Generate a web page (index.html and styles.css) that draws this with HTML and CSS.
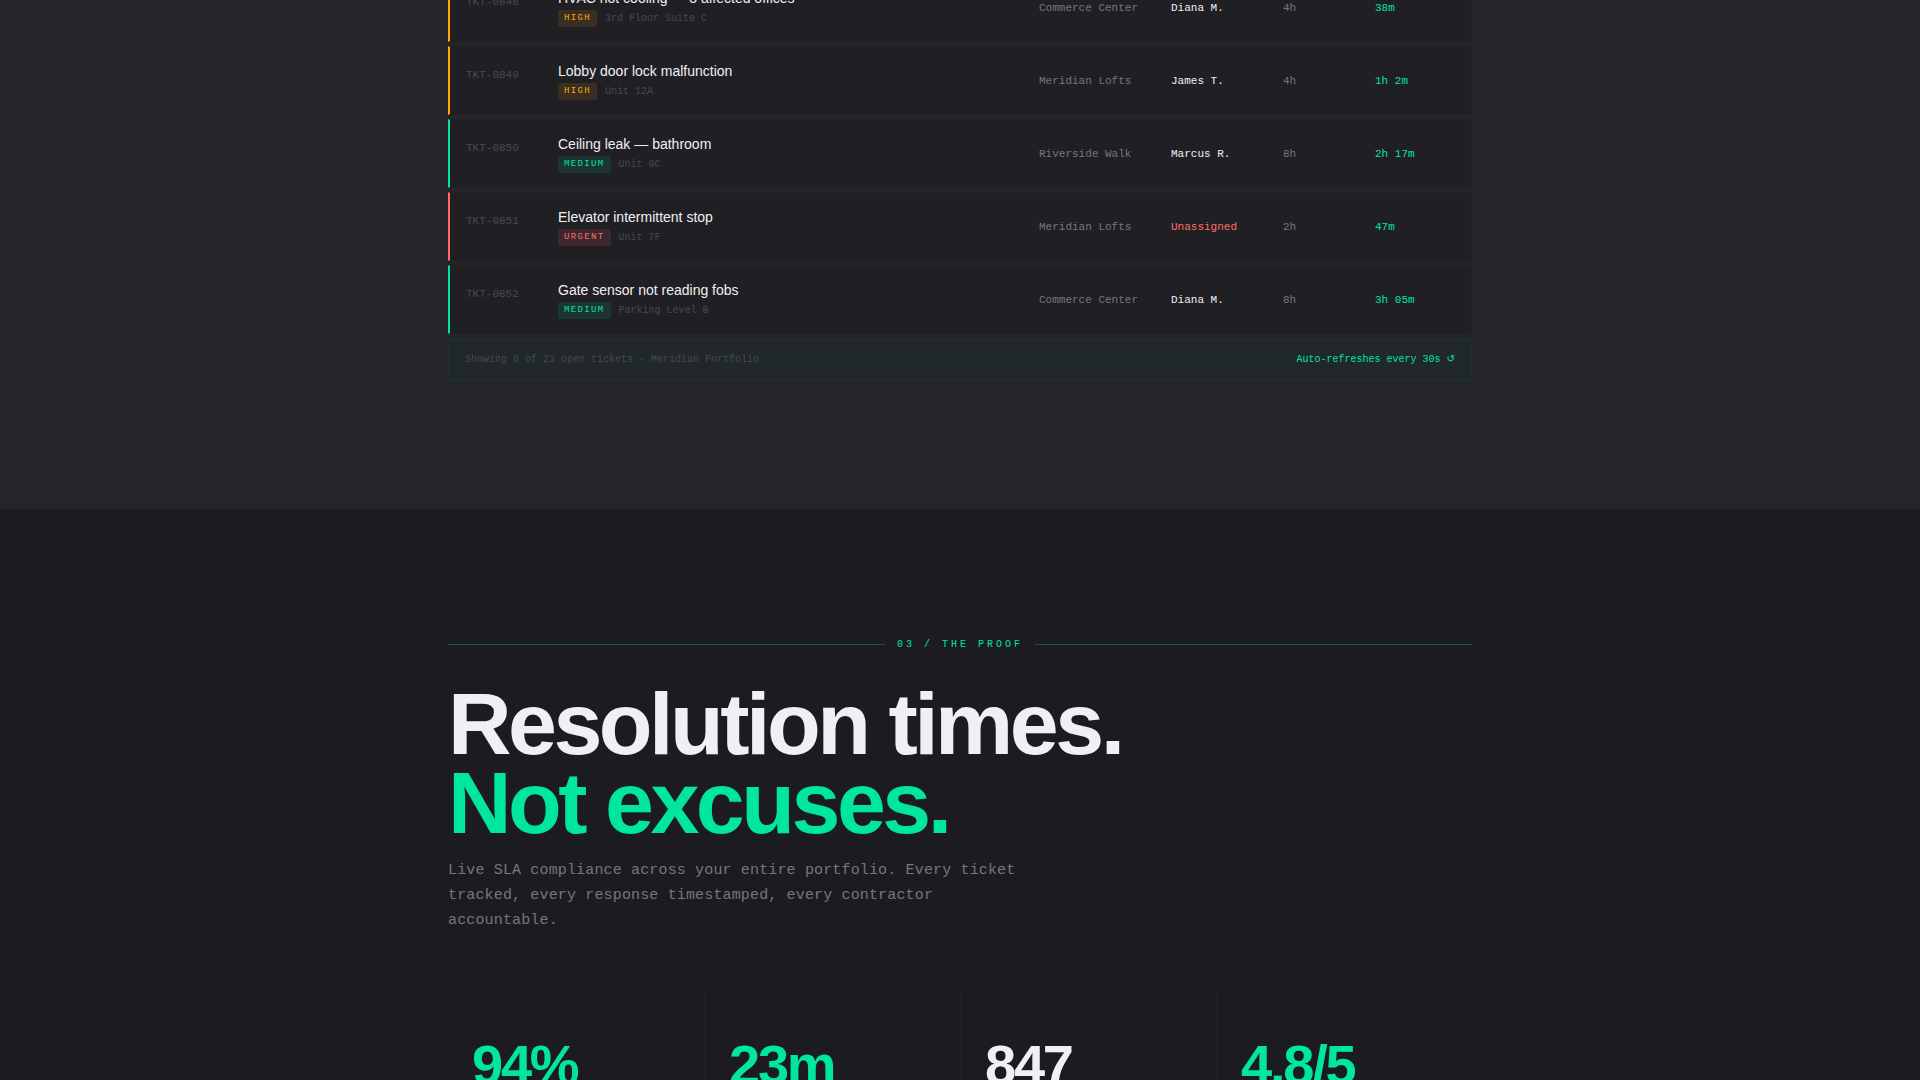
FILE: index.html
```html
<!DOCTYPE html>
<html lang="en">
<head>
  <meta charset="UTF-8">
  <meta name="viewport" content="width=device-width, initial-scale=1.0">
  <title>Meridian Portfolio</title>
  <link rel="stylesheet" href="styles.css">
</head>
<body>
  <section class="board">
    <div class="container">
      <table class="tickets">
        <tbody>
          <tr class="high">
            <td class="id">TKT-0848</td>
            <td>
              <div class="title">HVAC not cooling — 3 affected offices</div>
              <div class="meta"><span class="badge">HIGH</span><span>3rd Floor Suite C</span></div>
            </td>
            <td class="property">Commerce Center</td>
            <td class="assignee">Diana M.</td>
            <td class="sla">4h</td>
            <td class="elapsed">38m</td>
          </tr>
          <tr class="high">
            <td class="id">TKT-0849</td>
            <td>
              <div class="title">Lobby door lock malfunction</div>
              <div class="meta"><span class="badge">HIGH</span><span>Unit 12A</span></div>
            </td>
            <td class="property">Meridian Lofts</td>
            <td class="assignee">James T.</td>
            <td class="sla">4h</td>
            <td class="elapsed">1h 2m</td>
          </tr>
          <tr class="medium">
            <td class="id">TKT-0850</td>
            <td>
              <div class="title">Ceiling leak — bathroom</div>
              <div class="meta"><span class="badge">MEDIUM</span><span>Unit 9C</span></div>
            </td>
            <td class="property">Riverside Walk</td>
            <td class="assignee">Marcus R.</td>
            <td class="sla">8h</td>
            <td class="elapsed">2h 17m</td>
          </tr>
          <tr class="urgent">
            <td class="id">TKT-0851</td>
            <td>
              <div class="title">Elevator intermittent stop</div>
              <div class="meta"><span class="badge">URGENT</span><span>Unit 7F</span></div>
            </td>
            <td class="property">Meridian Lofts</td>
            <td class="assignee unassigned">Unassigned</td>
            <td class="sla">2h</td>
            <td class="elapsed">47m</td>
          </tr>
          <tr class="medium">
            <td class="id">TKT-0852</td>
            <td>
              <div class="title">Gate sensor not reading fobs</div>
              <div class="meta"><span class="badge">MEDIUM</span><span>Parking Level B</span></div>
            </td>
            <td class="property">Commerce Center</td>
            <td class="assignee">Diana M.</td>
            <td class="sla">8h</td>
            <td class="elapsed">3h 05m</td>
          </tr>
        </tbody>
      </table>
      <div class="board-footer">
        <span>Showing 6 of 23 open tickets · Meridian Portfolio</span>
        <span class="refresh">Auto-refreshes every 30s <span class="refresh-icon">↺</span></span>
      </div>
    </div>
  </section>

  <section class="proof">
    <div class="container">
      <div class="section-label">03 / THE PROOF</div>
      <h2>Resolution times.<br><span class="accent">Not excuses.</span></h2>
      <p class="lead">Live SLA compliance across your entire portfolio. Every ticket tracked, every response timestamped, every contractor accountable.</p>
      <div class="stats">
        <div class="stat accent">94%</div>
        <div class="stat accent">23m</div>
        <div class="stat">847</div>
        <div class="stat accent">4.8/5</div>
      </div>
    </div>
  </section>
</body>
</html>
```
FILE: styles.css
```css
:root {
  --bg: #1c1c20;
  --bg-raised: #252529;
  --row: #202024;
  --text: #f0eff4;
  --muted: #77767d;
  --dim: #48484d;
  --green: #00e5a0;
  --amber: #ffaa00;
  --red: #ff6b6b;
  --sans: "Liberation Sans", Arial, sans-serif;
  --mono: "Liberation Mono", "Courier New", monospace;
}

* {
  box-sizing: border-box;
}

body {
  margin: 0;
  height: 100vh;
  overflow: hidden;
  background: var(--bg);
  color: var(--text);
  font-family: var(--mono);
}

.container {
  max-width: 1024px;
  margin: 0 auto;
}

.accent {
  color: var(--green);
}

/* Ticket board, first row runs off the top of the window */
.board {
  display: flow-root;
  padding-bottom: 128px;
  background: var(--bg-raised);
}

.tickets {
  width: 100%;
  margin-top: -31px;
  margin-bottom: 1px;
  table-layout: fixed;
  border-collapse: separate;
  border-spacing: 0 4px;
  font-size: 11px;
  line-height: 18px;
}

.tickets td {
  height: 69px;
  padding: 0 12px 0 0;
  background: var(--row);
  border: 0 solid #222226;
  border-width: 1px 0;
  vertical-align: middle;
}

.tickets td.id {
  width: 110px;
  padding: 19px 0 0 16px;
  border-left: 2px solid var(--tone);
  color: var(--dim);
  vertical-align: top;
}

.tickets .property {
  width: 132px;
  color: var(--muted);
}

.tickets .assignee {
  width: 112px;
}

.tickets .unassigned {
  color: var(--red);
}

.tickets .sla {
  width: 92px;
  color: var(--muted);
}

.tickets .elapsed {
  width: 97px;
  padding-right: 16px;
  border-right-width: 1px;
  color: var(--green);
}

.high {
  --tone: var(--amber);
  --tint: #3a2e22;
}

.medium {
  --tone: var(--green);
  --tint: #1c3530;
}

.urgent {
  --tone: var(--red);
  --tint: #3c272c;
}

.title {
  margin-bottom: 2px;
  font-family: var(--sans);
  font-size: 14px;
  line-height: 20px;
}

.meta {
  display: flex;
  align-items: center;
  gap: 8px;
  color: var(--dim);
  font-size: 10px;
}

.badge {
  padding: 0 6px 1px;
  border-radius: 2px;
  background: var(--tint);
  color: var(--tone);
  font-size: 9px;
  line-height: 16px;
  letter-spacing: 0.15em;
}

.board-footer {
  display: flex;
  justify-content: space-between;
  padding: 12px 16px;
  background: #20282a;
  border: 1px solid #203230;
  color: var(--dim);
  font-size: 10px;
  line-height: 16px;
}

.refresh {
  color: var(--green);
}

.refresh-icon {
  font-family: "DejaVu Sans", sans-serif;
  line-height: 1;
}

/* Proof section */
.proof {
  padding-top: 128px;
}

.section-label {
  display: flex;
  align-items: center;
  gap: 12px;
  color: var(--green);
  font-size: 10px;
  line-height: 15px;
  letter-spacing: 0.3em;
}

.section-label::before,
.section-label::after {
  content: "";
  flex: 1;
  height: 1px;
  background: var(--green);
  opacity: 0.3;
}

h2 {
  margin: 32px 0 16px;
  font-family: var(--sans);
  font-size: 88px;
  line-height: 79px;
  letter-spacing: -0.04em;
}

.lead {
  max-width: 580px;
  margin: 0 0 56px;
  color: var(--muted);
  font-size: 15px;
  line-height: 25px;
  letter-spacing: 0.01em;
}

.stats {
  display: grid;
  grid-template-columns: repeat(4, 1fr);
}

.stat {
  padding: 48px 24px;
  font-family: var(--sans);
  font-size: 56px;
  font-weight: 700;
  line-height: 56px;
  letter-spacing: -0.04em;
}

.stat + .stat {
  border-left: 1px solid #222226;
}
```
